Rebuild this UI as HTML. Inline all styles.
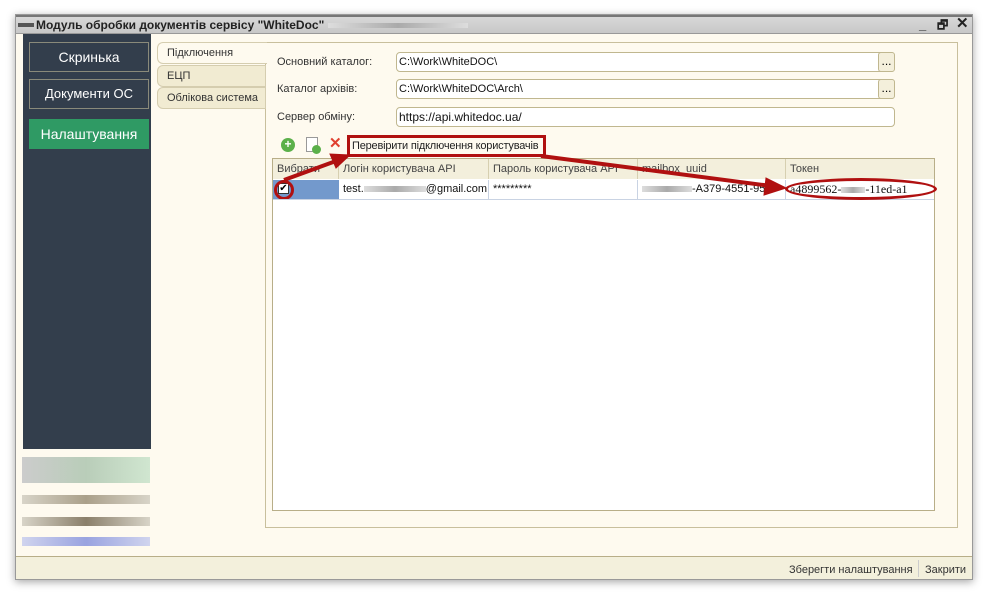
<!DOCTYPE html>
<html><head><meta charset="utf-8"><style>
*{box-sizing:border-box;margin:0;padding:0}
body{width:989px;height:593px;background:#fff;font-family:"Liberation Sans",sans-serif;font-size:12px;position:relative;overflow:hidden;white-space:nowrap}
.a{position:absolute}
.win{left:15px;top:14px;width:958px;height:566px;background:#fefaef;border:1px solid #999;box-shadow:0 2px 8px rgba(0,0,0,.35)}
.title{left:0;top:0;width:956px;height:19px;background:linear-gradient(#d8d8d8,#c8c8c8);border-top:2px solid #777;border-bottom:1px solid #999;font-weight:bold;font-size:12px;color:#222;line-height:16px;padding-left:20px}
.side{left:7px;top:19px;width:128px;height:415px;background:#333e4c}
.nb{position:absolute;left:6px;width:120px;height:30px;border:1px solid #8a8a7a;color:#fff;font-size:14px;text-align:center;line-height:28px}
.tab{position:absolute;left:141px;width:109px;height:22px;background:#f1ebd2;border:1px solid #d5cdaf;border-radius:6px 0 0 6px;padding-left:9px;line-height:20px;color:#333;font-size:11px}
.lbl{position:absolute;left:261px;color:#333;font-size:11px}
.inp{position:absolute;left:380px;height:20px;background:#fff;border:1px solid #c0b78f;border-radius:4px;padding-left:2px;line-height:18px;font-size:11px;color:#111}
.dots{position:absolute;left:862px;width:17px;height:20px;border:1px solid #c0b78f;border-radius:3px;background:#f4efdb;text-align:center;line-height:16px}
.th{position:absolute;top:144px;height:20px;border-right:1px solid #d6cfb0;line-height:20px;padding-left:4px;color:#444;background:#f3efdc;font-size:11px;overflow:hidden}
.td{position:absolute;top:165px;height:19px;border-right:1px solid #c9d3e3;line-height:19px;padding-left:4px;color:#111;font-size:11px;overflow:hidden}
.blur{display:inline-block;height:6px;vertical-align:middle;background:linear-gradient(90deg,#ddd,#aaa,#ddd)}
</style></head><body>
<div class="a win">
<div class="a title"><span class="a" style="left:2px;top:6px;width:16px;height:4px;background:#555"></span>Модуль обробки документів сервісу "WhiteDoc" <span class="blur" style="width:140px;height:5px"></span>
<span class="a" style="left:903px;top:0;font-size:13px">_</span><span class="a" style="left:921px;top:0">🗗</span><span class="a" style="left:940px;top:-1px;font-size:15px">✕</span></div>
<div class="a side">
<div class="nb" style="top:8px">Скринька</div>
<div class="nb" style="top:45px;font-size:13px">Документи ОС</div>
<div class="nb" style="top:85px;background:#2f9a64;border-color:#2f9a64">Налаштування</div>
</div>
<div class="a" style="left:6px;top:442px;width:128px;height:26px;background:linear-gradient(90deg,#ccc,#b9cdb9,#d0e6d0)"></div>
<div class="a" style="left:6px;top:480px;width:128px;height:9px;background:linear-gradient(90deg,#d8d4c8,#aaa08a,#d8d4c8)"></div>
<div class="a" style="left:6px;top:502px;width:128px;height:9px;background:linear-gradient(90deg,#d8d4c8,#8a7f6a,#d8d4c8)"></div>
<div class="a" style="left:6px;top:522px;width:128px;height:9px;background:linear-gradient(90deg,#d0d4ee,#99a3e0,#d0d4ee)"></div>

<div class="a" style="left:249px;top:27px;width:693px;height:486px;border:1px solid #c8bf9c;background:#fefaef"></div>
<div class="tab" style="top:27px;background:#fefaef;border-right:none;width:110px">Підключення</div>
<div class="tab" style="top:50px">ЕЦП</div>
<div class="tab" style="top:72px">Облікова система</div>

<div class="lbl" style="top:41px">Основний каталог:</div>
<div class="inp" style="top:37px;width:499px">C:\Work\WhiteDOC\</div><div class="dots" style="top:37px">...</div>
<div class="lbl" style="top:68px">Каталог архівів:</div>
<div class="inp" style="top:64px;width:499px">C:\Work\WhiteDOC\Arch\</div><div class="dots" style="top:64px">...</div>
<div class="lbl" style="top:96px">Сервер обміну:</div>
<div class="inp" style="top:92px;width:499px;font-size:12px">https://api.whitedoc.ua/</div>

<div class="a" style="left:265px;top:123px;width:14px;height:14px;border-radius:50%;background:#5bb04a;color:#fff;font-weight:bold;text-align:center;line-height:13px">+</div>
<div class="a" style="left:290px;top:122px;width:12px;height:15px;border:1px solid #999;background:#fff"></div>
<div class="a" style="left:296px;top:130px;width:9px;height:9px;border-radius:50%;background:#5bb04a"></div>
<div class="a" style="left:313px;top:119px;color:#e04030;font-size:15px;font-weight:bold">✕</div>
<div class="a" style="left:331px;top:120px;width:199px;height:22px;border:3px solid #b01010;line-height:16px;padding-left:2px;color:#222;font-size:11px;letter-spacing:-0.2px">Перевірити підключення користувачів</div>

<div class="a" style="left:256px;top:143px;width:663px;height:353px;border:1px solid #b8ae88;background:#fff"></div>
<div class="a" style="left:257px;top:144px;width:661px;height:20px;background:#f3efdc;border-bottom:1px solid #d6cfb0"></div>
<div class="th" style="left:257px;width:66px">Вибрати</div>
<div class="th" style="left:323px;width:150px">Логін користувача API</div>
<div class="th" style="left:473px;width:149px">Пароль користувача API</div>
<div class="th" style="left:622px;width:148px">mailbox_uuid</div>
<div class="th" style="left:770px;width:148px;border-right:none">Токен</div>
<div class="a" style="left:257px;top:165px;width:66px;height:19px;background:#7399cc"></div>
<div class="a" style="left:262px;top:168px;width:11px;height:11px;background:#fff;border:1px solid #333;font-size:10px;line-height:9px;text-align:center">✔</div>
<div class="a" style="left:258px;top:165px;width:20px;height:20px;border:3px solid #b01010;border-radius:50%"></div>
<div class="td" style="left:323px;width:150px">test.<span class="blur" style="width:62px"></span>@gmail.com</div>
<div class="td" style="left:473px;width:149px">*********</div>
<div class="td" style="left:622px;width:148px"><span class="blur" style="width:50px"></span>-A379-4551-952</div>
<div class="td" style="left:770px;width:148px;border-right:none;font-family:'Liberation Serif',serif;font-size:12px">a4899562-<span class="blur" style="width:24px"></span>-11ed-a1</div>
<div class="a" style="left:257px;top:184px;width:661px;height:1px;background:#c9d3e3"></div>
<div class="a" style="left:769px;top:163px;width:152px;height:22px;border:3px solid #b01010;border-radius:50%"></div>
<svg class="a" style="left:0;top:0" width="958" height="566"><g fill="#b01010" stroke="#b01010">
<line x1="268" y1="165" x2="320" y2="146" stroke-width="4"/><polygon points="334,140 314,139 320,153"/>
<line x1="525" y1="141" x2="755" y2="171" stroke-width="4"/><polygon points="770,173 750,163 748,180"/></g></svg>

<div class="a" style="left:0;top:541px;width:956px;height:23px;background:#f3f0dc;border-top:1px solid #b8ae88"></div>
<div class="a" style="left:773px;top:549px;color:#333;font-size:11px">Зберегти налаштування</div>
<div class="a" style="left:902px;top:545px;width:1px;height:17px;background:#ccc"></div>
<div class="a" style="left:909px;top:549px;color:#333;font-size:11px">Закрити</div>
</div>
</body></html>
